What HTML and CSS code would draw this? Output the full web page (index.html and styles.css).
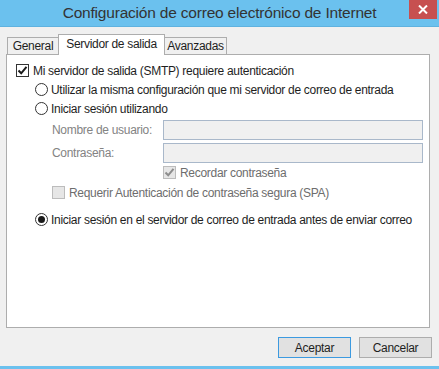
FILE: index.html
```html
<!DOCTYPE html>
<html lang="es">
<head>
    <meta charset="UTF-8">
    <title>Configuración de correo electrónico de Internet</title>
    <link rel="stylesheet" href="styles.css">
</head>
<body>
    <div class="window">
        <div class="titlebar">
            <span class="title">Configuración de correo electrónico de Internet</span>
            <span class="close-btn">
                <svg width="10" height="9" viewBox="0 0 10 9"><path d="M1 0.5 L9 8.5 M9 0.5 L1 8.5" stroke="#fff" stroke-width="2"/></svg>
            </span>
        </div>

        <div class="dialog">
            <div class="tabs">
                <div class="tab tab-general">General</div>
                <div class="tab active">Servidor de salida</div>
                <div class="tab tab-advanced">Avanzadas</div>
            </div>

            <div class="panel">
                <div class="row">
                    <span class="check checked">
                        <svg width="11" height="11" viewBox="0 0 11 11"><path d="M1.5 5.5 L4.2 8.3 L9.5 1.8" fill="none" stroke="#1a1a1a" stroke-width="2"/></svg>
                    </span>
                    <span class="text">Mi servidor de salida (SMTP) requiere autenticación</span>
                </div>
                <div class="row indent">
                    <span class="radio"></span>
                    <span class="text">Utilizar la misma configuración que mi servidor de correo de entrada</span>
                </div>
                <div class="row indent">
                    <span class="radio"></span>
                    <span class="text">Iniciar sesión utilizando</span>
                </div>

                <div class="field first">
                    <label class="field-label">Nombre de usuario:</label>
                    <span class="field-input"></span>
                </div>
                <div class="field">
                    <label class="field-label">Contraseña:</label>
                    <span class="field-input"></span>
                </div>

                <div class="row remember">
                    <span class="check disabled">
                        <svg width="11" height="11" viewBox="0 0 11 11"><path d="M1.5 5.5 L4.2 8.3 L9.5 1.8" fill="none" stroke="#8d8d8d" stroke-width="2"/></svg>
                    </span>
                    <span class="text">Recordar contraseña</span>
                </div>
                <div class="row sub">
                    <span class="check disabled"></span>
                    <span class="text">Requerir Autenticación de contraseña segura (SPA)</span>
                </div>

                <div class="row indent last">
                    <span class="radio selected"></span>
                    <span class="text">Iniciar sesión en el servidor de correo de entrada antes de enviar correo</span>
                </div>
            </div>

            <div class="buttons">
                <button type="button" class="button default">Aceptar</button>
                <button type="button" class="button">Cancelar</button>
            </div>
        </div>
        <div class="bottom-edge"></div>
    </div>
</body>
</html>
```

FILE: styles.css
```css
* {
    box-sizing: border-box;
    margin: 0;
    padding: 0;
}

body {
    font-family: 'Liberation Sans', Arial, sans-serif;
    font-size: 12px;
    letter-spacing: -0.3px;
    color: #1e1e1e;
    background-color: #f0f0f0;
    width: 439px;
    height: 369px;
    overflow: hidden;
}

.window {
    display: flex;
    flex-direction: column;
    height: 369px;
}

.titlebar {
    height: 27px;
    background-color: #6bc1ee;
    border-bottom: 1px solid #5fb2df;
    display: flex;
    justify-content: center;
    align-items: flex-start;
    position: relative;
}

.title {
    font-size: 15.5px;
    letter-spacing: -0.2px;
    color: #333;
    line-height: 25px;
    white-space: nowrap;
}

.close-btn {
    position: absolute;
    top: 0;
    right: 2px;
    width: 28px;
    height: 19px;
    background-color: #c75050;
    display: flex;
    justify-content: center;
    align-items: center;
}

.dialog {
    flex: 1;
    padding: 7px 9px 0 6px;
    display: flex;
    flex-direction: column;
}

.tabs {
    display: flex;
    align-items: flex-end;
    height: 20px;
    padding-left: 1px;
    position: relative;
    z-index: 1;
}

.tab {
    height: 17px;
    line-height: 16px;
    text-align: center;
    border: 1px solid #adadad;
    border-bottom: none;
    background-color: #f0f0f0;
    white-space: nowrap;
}

.tab-general {
    width: 52px;
}

.tab-advanced {
    width: 63px;
}

.tab + .tab {
    margin-left: -1px;
}

.tab.active {
    width: 107px;
    height: 21px;
    line-height: 18px;
    background-color: #fff;
    margin-bottom: -1px;
}

.panel {
    height: 274px;
    background-color: #fff;
    border: 1px solid #adadad;
    padding: 6px 0 6px 9px;
}

.row {
    display: flex;
    align-items: center;
    height: 19px;
    white-space: nowrap;
}

.indent {
    padding-left: 19px;
}

.check {
    width: 13px;
    height: 13px;
    border: 1px solid #333;
    background-color: #fff;
    display: flex;
    justify-content: center;
    align-items: center;
    flex-shrink: 0;
    margin-right: 4px;
}

.check.disabled {
    border-color: #bcbcbc;
    background-color: #e6e6e6;
}

.radio {
    width: 13px;
    height: 13px;
    border: 1px solid #333;
    border-radius: 50%;
    background-color: #fff;
    flex-shrink: 0;
    margin-right: 3px;
    display: flex;
    justify-content: center;
    align-items: center;
}

.radio.selected::after {
    content: "";
    width: 7px;
    height: 7px;
    border-radius: 50%;
    background-color: #1a1a1a;
}

.field {
    display: flex;
    align-items: center;
    padding-left: 36px;
    height: 20px;
    margin-top: 3px;
}

.field.first {
    margin-top: 2px;
}

.field-label {
    width: 111px;
    flex-shrink: 0;
    color: #838383;
}

.field-input {
    width: 260px;
    flex-shrink: 0;
    height: 20px;
    border: 1px solid #a9b8ca;
    background-color: #f0f0f0;
}

.remember {
    padding-left: 147px;
    margin-top: 0;
}

.sub {
    padding-left: 36px;
    margin-top: 1px;
}

.remember .text,
.sub .text {
    color: #6d6d6d;
}

.last {
    margin-top: 8px;
}

.buttons {
    display: flex;
    justify-content: flex-end;
    gap: 8px;
    margin-top: 9px;
    margin-right: -2px;
}

.button {
    width: 73px;
    height: 21px;
    font-family: inherit;
    font-size: 12px;
    letter-spacing: inherit;
    color: #1e1e1e;
    background-color: #e1e1e1;
    border: 1px solid #adadad;
}

.button.default {
    border-color: #3c9ae0;
}

.bottom-edge {
    height: 3px;
    background-color: #6bc1ee;
}
```
